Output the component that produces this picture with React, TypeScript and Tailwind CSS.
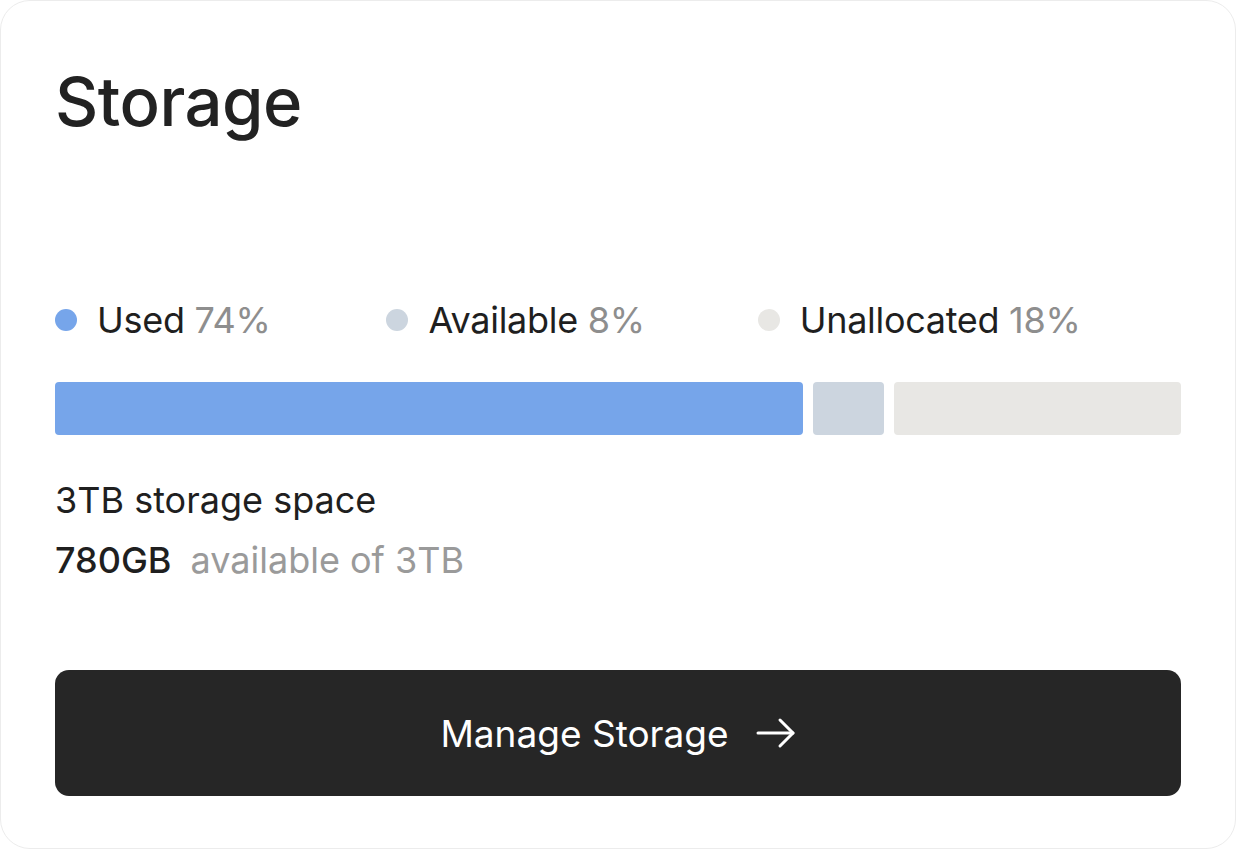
/** Storage card — title, legend, segmented usage bar, summary lines, manage button. */

const segments = [
  { label: 'Used', pct: '74%', dot: 'bg-[#76a5ea]', bar: 'bg-[#76a5ea]', grow: 'grow-[749]', gap: '' },
  { label: 'Available', pct: '8%', dot: 'bg-[#ccd5df]', bar: 'bg-[#ccd5df]', grow: 'grow-[71]', gap: 'ml-[116px]' },
  { label: 'Unallocated', pct: '18%', dot: 'bg-[#e8e7e4]', bar: 'bg-[#e8e7e4]', grow: 'grow-[287]', gap: 'ml-[113px]' },
]

function ArrowRight() {
  return (
    <svg width="40" height="32" viewBox="0 0 40 32" fill="none" stroke="currentColor" strokeWidth="3" strokeLinecap="round" strokeLinejoin="round">
      <line x1="2" y1="16" x2="37" y2="16" />
      <polyline points="24,3 37,16 24,29" />
    </svg>
  )
}

export default function App() {
  return (
    <div className="h-screen w-full bg-white font-['Inter','Liberation_Sans',sans-serif]">
      <div className="h-full w-full rounded-[30px] border border-[#ececec] bg-white px-[54px] flex flex-col">
        {/* Title */}
        <h1 className="mt-[67px] text-[67px] leading-[67px] font-medium tracking-[-0.5px] text-[#222222]">Storage</h1>

        {/* Legend */}
        <div className="mt-[167px] flex items-center h-[36px]">
          {segments.map((s) => (
            <div key={s.label} className={`flex items-center gap-[20px] ${s.gap}`}>
              <span className={`w-[22px] h-[22px] rounded-full ${s.dot}`} />
              <span className="text-[36px] leading-[36px] tracking-[-0.3px] text-[#1f1f1f]">
                {s.label} <span className="text-[#8e8e8e]">{s.pct}</span>
              </span>
            </div>
          ))}
        </div>

        {/* Usage bar */}
        <div className="mt-[44px] flex gap-[10px] h-[53px]">
          {segments.map((s) => (
            <div key={s.label} className={`basis-0 ${s.grow} rounded-[4px] ${s.bar}`} />
          ))}
        </div>

        {/* Summary */}
        <div className="mt-[47px] text-[36px] leading-[36px] text-[#1f1f1f]">3TB storage space</div>
        <div className="mt-[24px] text-[36px] leading-[36px]">
          <span className="text-[#1f1f1f] font-medium">780GB</span>
          <span className="ml-[19px] text-[#9a9a9a]">available of 3TB</span>
        </div>

        {/* Button */}
        <button className="mt-[92px] h-[126px] w-full rounded-[14px] bg-[#262626] text-white flex items-center justify-center gap-[27px]">
          <span className="text-[37px] leading-[37px]">Manage Storage</span>
          <ArrowRight />
        </button>
      </div>
    </div>
  )
}
